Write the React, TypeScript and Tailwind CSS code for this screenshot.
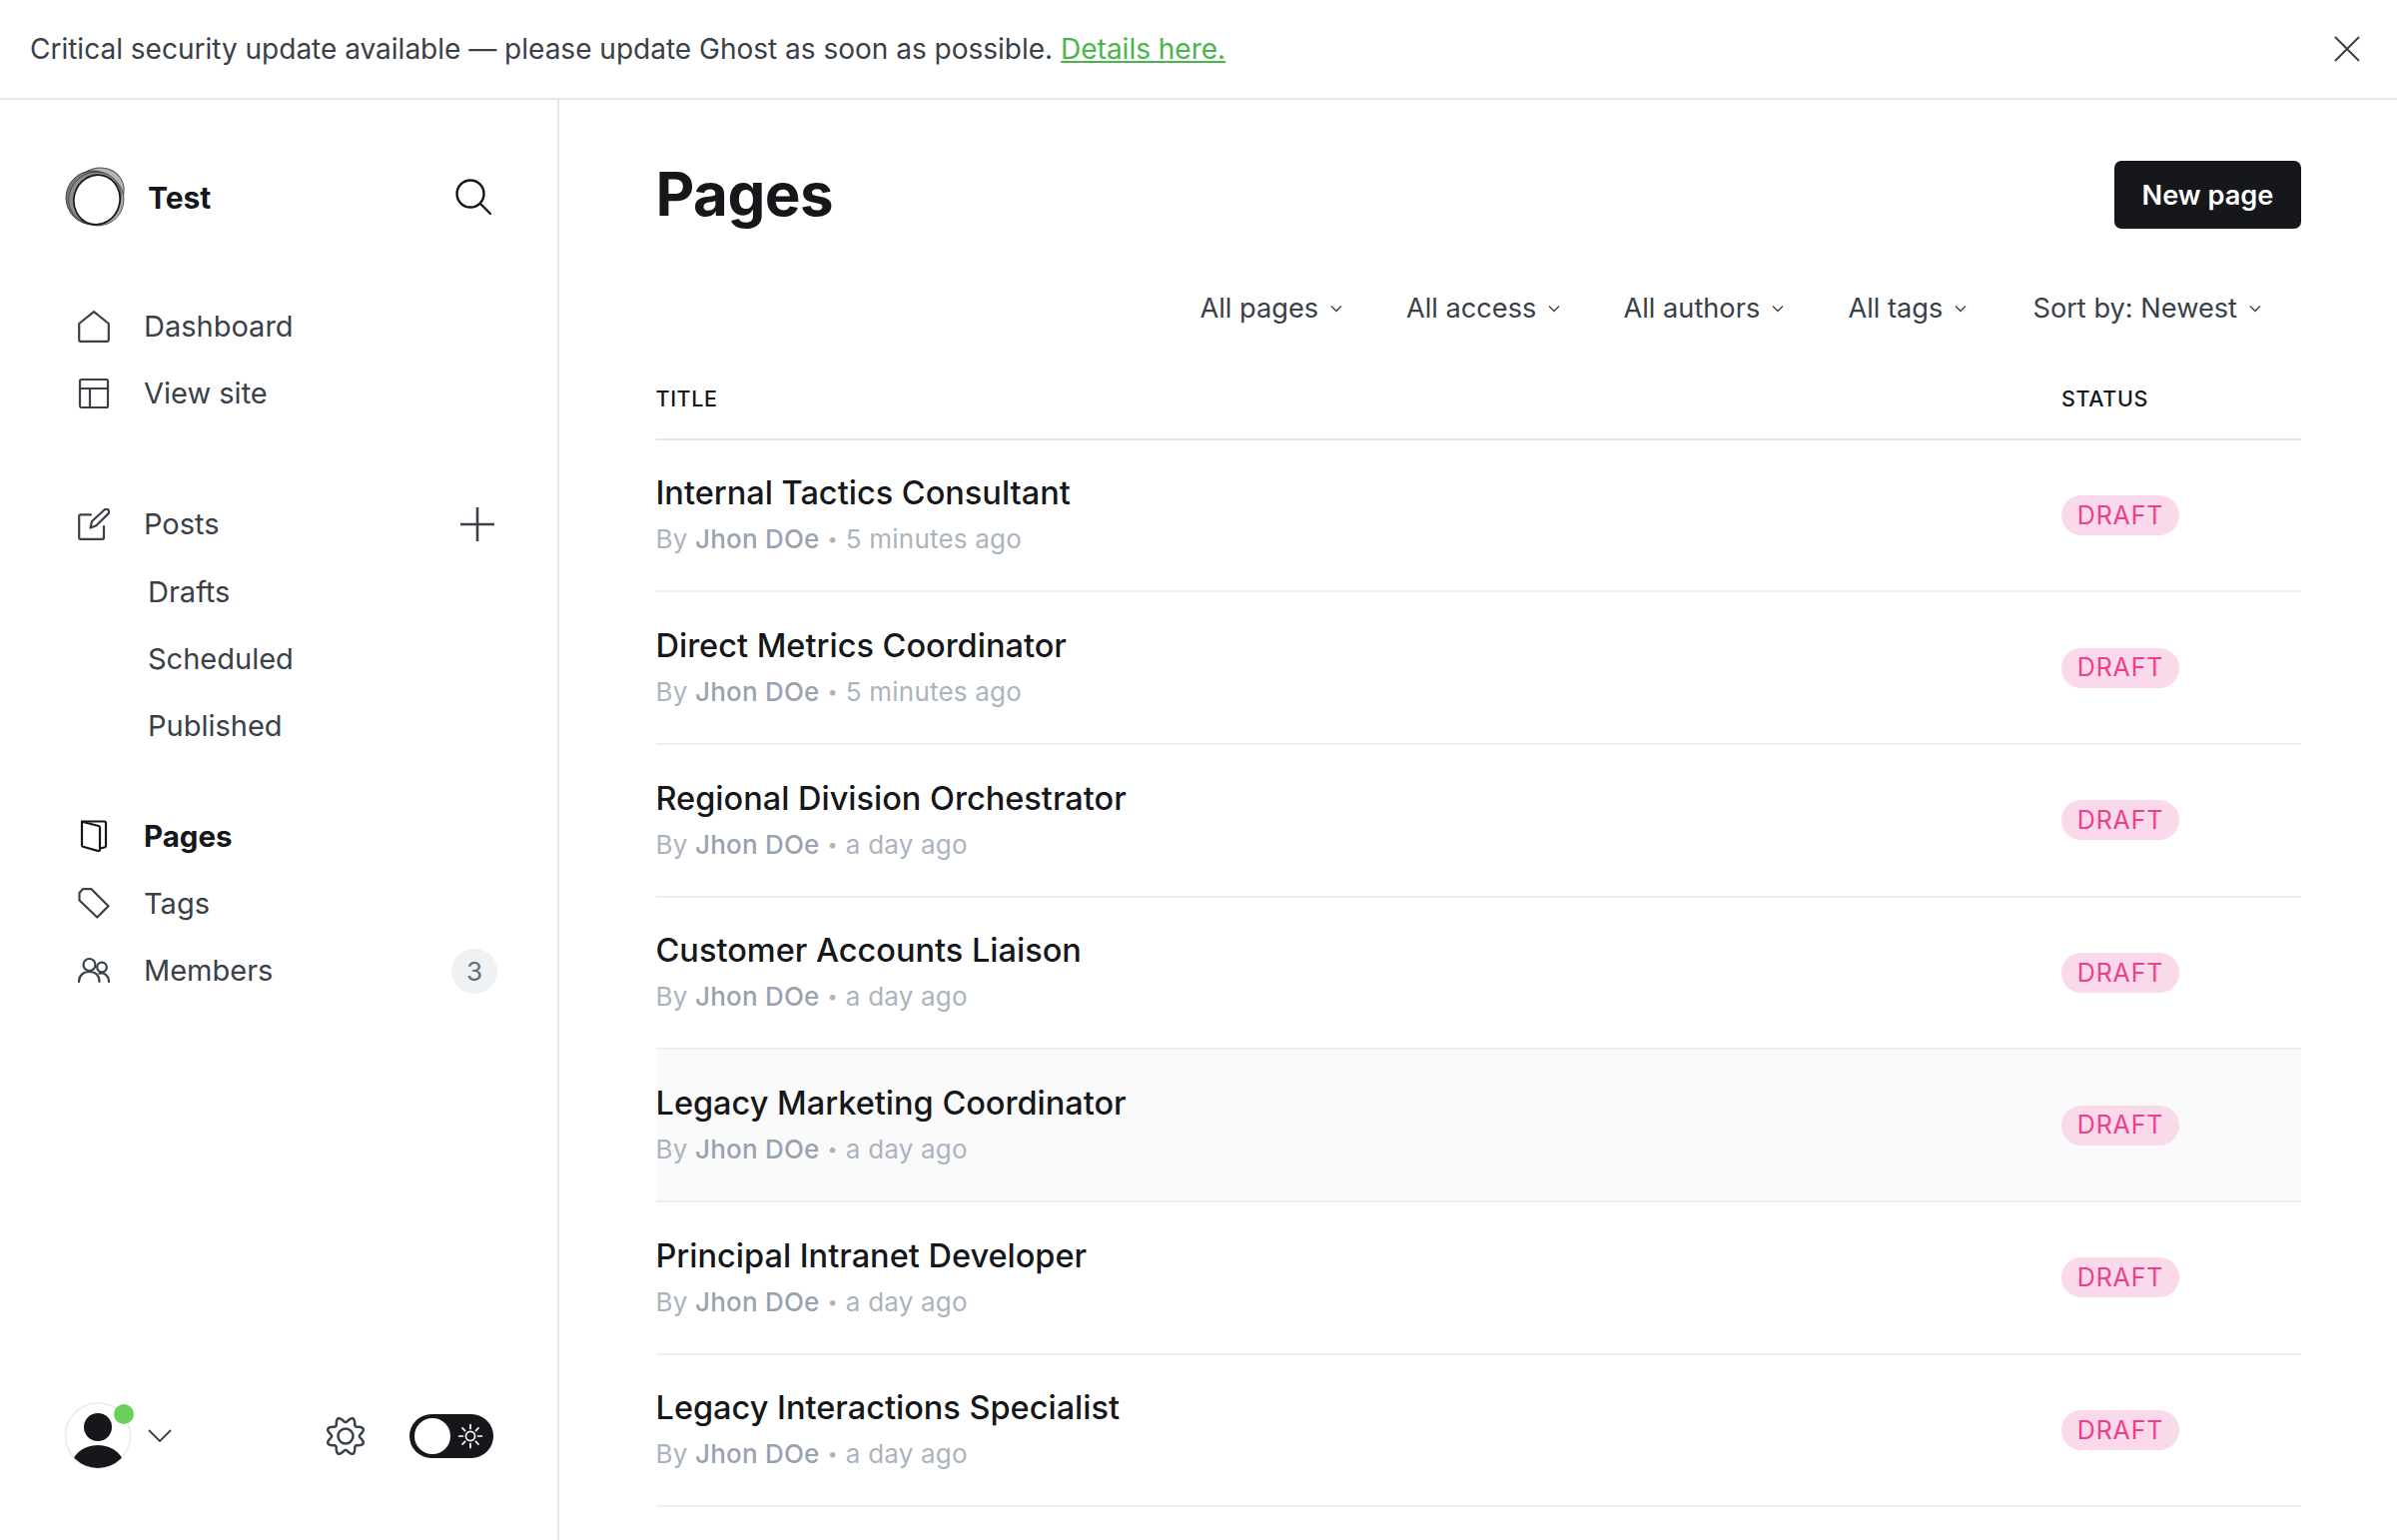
import { ReactNode } from 'react'

const pages = [
  { title: 'Internal Tactics Consultant', time: '5 minutes ago' },
  { title: 'Direct Metrics Coordinator', time: '5 minutes ago' },
  { title: 'Regional Division Orchestrator', time: 'a day ago' },
  { title: 'Customer Accounts Liaison', time: 'a day ago' },
  { title: 'Legacy Marketing Coordinator', time: 'a day ago', hover: true },
  { title: 'Principal Intranet Developer', time: 'a day ago' },
  { title: 'Legacy Interactions Specialist', time: 'a day ago' }
]

const filters = [
  { label: 'All pages', className: 'w-[206.5px]' },
  { label: 'All access', className: 'w-[217.5px]' },
  { label: 'All authors', className: 'w-[225px]' },
  { label: 'All tags', className: 'w-[185px]' },
  { label: 'Sort by: Newest', className: '' }
]

// wavy outline of the settings gear, eight rounded teeth
const gearPath =
  Array.from({ length: 144 }, (_, i) => {
    const a = (i / 144) * Math.PI * 2
    const r = 16.5 + 2.6 * Math.cos(8 * a - Math.PI)
    const x = 21 + r * Math.sin(a)
    const y = 21 - r * Math.cos(a)
    return `${i === 0 ? 'M' : 'L'}${x.toFixed(2)} ${y.toFixed(2)}`
  }).join(' ') + ' Z'

function Icon({ children, className = '' }: { children: ReactNode; className?: string }) {
  return (
    <svg
      viewBox="0 0 32 32"
      fill="none"
      stroke="currentColor"
      strokeWidth="2.2"
      strokeLinecap="round"
      strokeLinejoin="round"
      className={`w-8 h-8 shrink-0 ${className}`}
    >
      {children}
    </svg>
  )
}

function NavRow({
  icon,
  label,
  active,
  right
}: {
  icon: ReactNode
  label: string
  active?: boolean
  right?: ReactNode
}) {
  return (
    <div className="h-[67.3px] flex items-center">
      <div className={active ? 'text-[#15171a]' : 'text-[#394047]'}>{icon}</div>
      <span className={`ml-[34px] ${active ? 'text-[29.500px] font-bold text-[#15171a]' : 'text-[29px] text-[#394047]'}`}>
        {label}
      </span>
      {right && <div className="ml-auto">{right}</div>}
    </div>
  )
}

function SubRow({ label }: { label: string }) {
  return <div className="h-[67.3px] flex items-center pl-[70px] text-[29px] text-[#394047]">{label}</div>
}

function Logo() {
  return (
    <svg viewBox="0 0 60 60" fill="none" className="w-[60px] h-[60px] shrink-0">
      <ellipse cx="33" cy="26" rx="27" ry="24" transform="rotate(-35 33 26)" fill="#b4b5b6" stroke="#15171a" strokeOpacity="0.7" strokeWidth="1" />
      <ellipse cx="33" cy="33" rx="26" ry="26" fill="#a8a9aa" stroke="#15171a" strokeOpacity="0.6" strokeWidth="1" />
      <ellipse cx="28" cy="31" rx="27" ry="27" fill="#77787a" stroke="#15171a" strokeOpacity="0.7" strokeWidth="1" />
      <ellipse cx="30" cy="31" rx="27" ry="25" transform="rotate(-40 30 31)" fill="#8c8d8e" stroke="#15171a" strokeOpacity="0.6" strokeWidth="0.8" />
      <ellipse cx="32" cy="33" rx="23" ry="25" transform="rotate(15 32 33)" fill="white" stroke="#15171a" strokeWidth="1.700" />
    </svg>
  )
}

function Chevron() {
  return (
    <svg viewBox="0 0 12 8" fill="none" stroke="#394047" strokeWidth="1.4" className="w-[12px] h-[8px] ml-[12px]">
      <path d="M1 1.5 6 6.5 11 1.5" />
    </svg>
  )
}

function PageRow({ title, time, hover }: { title: string; time: string; hover?: boolean }) {
  return (
    <div className={`h-[152.7px] flex items-center border-b-2 border-[#edeef0] ${hover ? 'bg-[#fafafb]' : ''}`}>
      <div className="flex-1">
        <div className="pt-[1px] text-[32.5px] leading-[40px] font-medium text-[#15171a]">{title}</div>
        <div className="mt-[8px] flex items-center text-[26px] leading-[36px] tracking-[0.2px] text-[#abb4be]">
          By&nbsp;<span className="font-medium text-[#99a3b0]">Jhon DOe</span>
          <span className="mx-[8px] text-[18px]">•</span>
          {time}
        </div>
      </div>
      <div className="w-[240px]">
        <span className="inline-flex items-center justify-center w-[118px] h-10 pt-[1px] rounded-full bg-[#f9d9ea] text-[25px] tracking-[0.8px] text-[#ec3f8e]">
          DRAFT
        </span>
      </div>
    </div>
  )
}

export default function App() {
  return (
    <div className="h-screen flex flex-col overflow-hidden bg-white font-[Inter,sans-serif]">
      {/* Security banner */}
      <div className="h-[100px] shrink-0 flex items-center justify-between border-b-2 border-[#e5e6e8] pl-[30px] pr-[36px]">
        <p className="text-[28px] text-[#394047]">
          Critical security update available — please update Ghost as soon as possible.{' '}
          <span className="text-[#4ab54a] underline">Details here.</span>
        </p>
        <svg viewBox="0 0 28 28" fill="none" stroke="#394047" strokeWidth="2" className="w-7 h-7">
          <path d="M2 2 26 26M26 2 2 26" />
        </svg>
      </div>

      <div className="flex-1 flex min-h-0">
        {/* Sidebar */}
        <aside className="w-[560px] shrink-0 border-r-2 border-[#e5e6e8] flex flex-col pt-[67px] pb-[71px] pl-[65px] pr-[60px]">
          <div className="flex items-center h-[60px]">
            <Logo />
            <span className="ml-[23px] mt-[2px] text-[30px] font-bold text-[#15171a]">Test</span>
            <svg viewBox="0 0 36 36" fill="none" stroke="#15171a" strokeWidth="2.4" strokeLinecap="round" className="ml-auto mr-[6px] w-9 h-9">
              <circle cx="15" cy="15" r="13.5" />
              <path d="M25 25 35 35" />
            </svg>
          </div>

          <nav className="mt-[66px] pl-[13px]">
            <NavRow
              label="Dashboard"
              icon={
                <Icon>
                  <path d="M1.2 13 16 1.2 30.8 13v16.5a1.3 1.3 0 0 1-1.3 1.3h-27a1.3 1.3 0 0 1-1.3-1.3Z" />
                </Icon>
              }
            />
            <NavRow
              label="View site"
              icon={
                <Icon>
                  <rect x="2" y="2" width="28" height="28" rx="1.5" />
                  <path d="M2 11h28M12 11v19" />
                </Icon>
              }
            />

            <div className="mt-[64px]">
              <NavRow
                label="Posts"
                icon={
                  <Icon>
                    <path d="M13 6.300H2.700A1.500 1.500 0 0 0 1.200 7.800v21.500a1.500 1.500 0 0 0 1.500 1.500h21.800a1.500 1.500 0 0 0 1.500-1.500V18" />
                    <path d="M12.500 19.500 14 13 26.500 1.500c1.300-1.100 3.100-.9 4.100.3 .9 1.200 .7 2.800-.4 3.800L18 17.500Z" />
                  </Icon>
                }
                right={
                  <svg viewBox="0 0 36 36" stroke="#394047" strokeWidth="2.6" className="mr-[2px] w-9 h-9">
                    <path d="M18 1v34M1 18h34" />
                  </svg>
                }
              />
              <SubRow label="Drafts" />
              <SubRow label="Scheduled" />
              <SubRow label="Published" />
            </div>

            <div className="mt-[43px]">
              <NavRow
                label="Pages"
                active
                icon={
                  <Icon>
                    <path d="M4 1.500h22.500A1.500 1.500 0 0 1 28 3v23a1.500 1.500 0 0 1-1.500 1.500L22 28.500" />
                    <path d="M4 1.700 20.800 6A1.600 1.600 0 0 1 22 7.500V30a1.200 1.200 0 0 1-1.600 1.100L5 26.800A1.600 1.600 0 0 1 4 25.300Z" />
                  </Icon>
                }
              />
              <NavRow
                label="Tags"
                icon={
                  <Icon>
                    <path d="M1.500 5 5 1.200h8.500L30.500 18.300 19.300 29.500 1.500 12.500Z" />
                  </Icon>
                }
              />
              <NavRow
                label="Members"
                icon={
                  <Icon>
                    <circle cx="11.5" cy="10" r="6" />
                    <path d="M1 27c0-6.5 4.5-10 10.5-10S21.500 20.500 21.500 27" />
                    <circle cx="24" cy="12.500" r="4.800" />
                    <path d="M21.500 18.800c5-1.400 9.500 2 9.500 8.200" />
                  </Icon>
                }
                right={
                  <span className="flex items-center justify-center w-[46px] h-[45px] rounded-full bg-[#eff1f3] text-[26px] text-[#626d79]">
                    3
                  </span>
                }
              />
            </div>
          </nav>

          {/* Footer */}
          <div className="mt-auto flex items-center h-[67px] -ml-[1px]">
            <div className="relative w-[68px] h-[67px]">
              <svg viewBox="0 0 68 67" className="w-full h-full">
                <defs>
                  <clipPath id="avatar-clip">
                    <circle cx="34" cy="33.500" r="32.500" />
                  </clipPath>
                </defs>
                <circle cx="34" cy="33.500" r="32.500" fill="white" stroke="#eeeeee" strokeWidth="2" />
                <g clipPath="url(#avatar-clip)" fill="#15171a">
                  <ellipse cx="34" cy="25" rx="14" ry="14" />
                  <ellipse cx="34" cy="66" rx="27" ry="23" />
                </g>
              </svg>
              <span className="absolute top-[2px] right-[-2px] w-5 h-5 rounded-full bg-[#6bd05c]" />
            </div>
            <svg viewBox="0 0 24 13" fill="none" stroke="#394047" strokeWidth="1.8" className="ml-[16px] w-[24px] h-[13px]">
              <path d="M1 1 12 12 23 1" />
            </svg>
            <svg viewBox="0 0 42 42" fill="none" stroke="#394047" strokeWidth="2.5" strokeLinejoin="round" className="ml-[153px] w-[42px] h-[42px]">
              <path d={gearPath} />
              <circle cx="21" cy="21" r="7.500" />
            </svg>
            <div className="ml-[42.5px] w-[84px] h-[44px] rounded-full bg-[#15171a] flex items-center pl-[5px]">
              <span className="w-9 h-9 rounded-full bg-white" />
              <svg viewBox="0 0 24 24" fill="none" stroke="white" strokeWidth="1.6" strokeLinecap="round" className="ml-[7px] w-[26px] h-[26px]">
                <circle cx="12" cy="12" r="4.200" />
                <path d="M12 1.500v3.500M12 19v3.500M1.500 12H5M19 12h3.500M4.600 4.600l2.400 2.400M17 17l2.400 2.400M19.400 4.600 17 7M7 17l-2.400 2.400" />
              </svg>
            </div>
          </div>
        </aside>

        {/* Main content */}
        <main className="flex-1 min-w-0 pl-[96.5px] pr-[96px]">
          <div className="flex items-center justify-between pt-[60px] h-[129px]">
            <h1 className="-mt-[2px] text-[60px] font-bold tracking-[-0.5px] text-[#15171a]">Pages</h1>
            <button className="w-[187px] h-[68px] pt-[3px] rounded-[7px] bg-[#15171a] text-white text-[27.2px] font-semibold">
              New page
            </button>
          </div>

          <div className="h-[102px] pt-[59px] flex items-center justify-end pr-[40px]">
            {filters.map((f) => (
              <div key={f.label} className={`flex items-center text-[27.2px] text-[#394047] ${f.className}`}>
                {f.label}
                <Chevron />
              </div>
            ))}
          </div>

          <div className="flex items-center h-[109.5px] pt-[29px] border-b-2 border-[#e5e6e8] text-[21.5px] font-medium tracking-[0.6px] text-[#15171a]">
            <div className="flex-1">TITLE</div>
            <div className="w-[240px]">STATUS</div>
          </div>

          {pages.map((p) => (
            <PageRow key={p.title} {...p} />
          ))}
        </main>
      </div>
    </div>
  )
}
